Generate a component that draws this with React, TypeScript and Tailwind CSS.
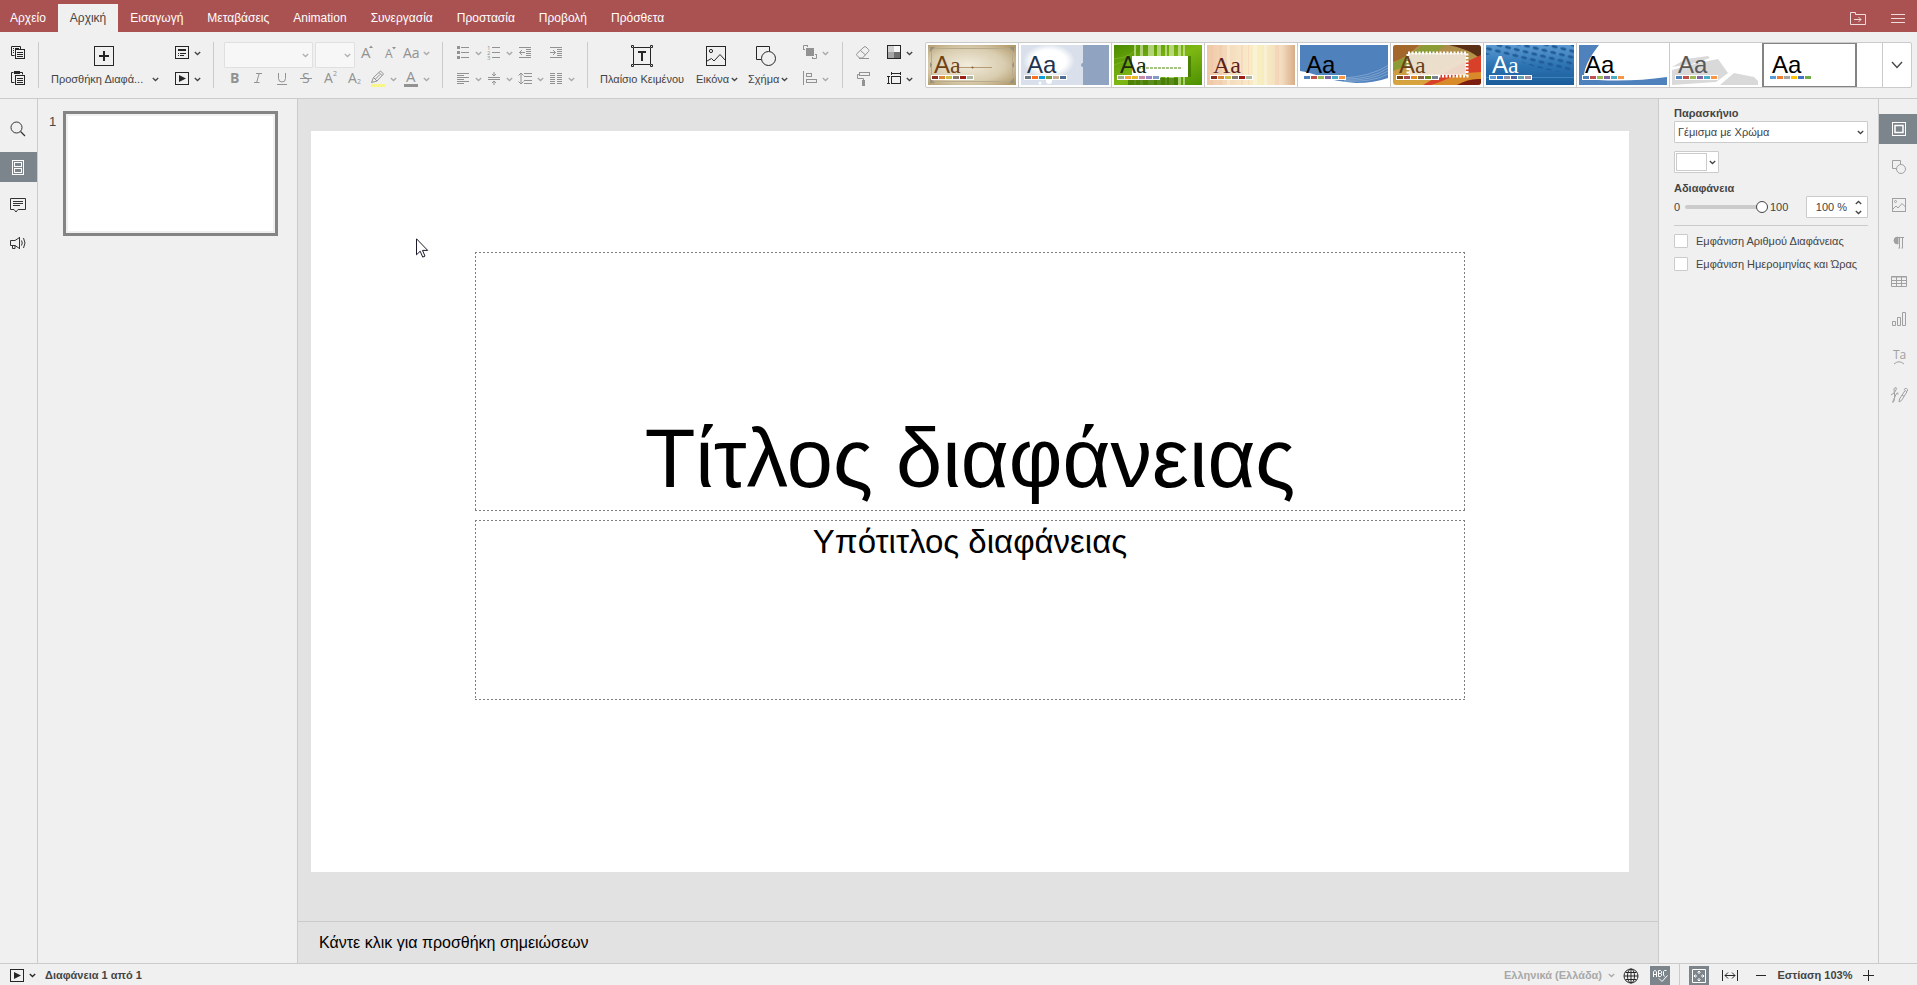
import type { ReactNode } from "react";

/* ---------- icon primitives ---------- */

function Icon({ size = 20, children, className = "" }: { size?: number; children: ReactNode; className?: string }) {
  return (
    <svg
      width={size}
      height={size}
      viewBox={`0 0 ${size} ${size}`}
      fill="none"
      stroke="currentColor"
      strokeWidth={1}
      aria-hidden="true"
      className={`shrink-0 overflow-visible ${className}`}
    >
      {children}
    </svg>
  );
}

function Caret({ className = "" }: { className?: string }) {
  return (
    <svg width={7} height={5} viewBox="0 0 7 5" fill="none" stroke="currentColor" strokeWidth={1.3} aria-hidden="true" className={`shrink-0 ${className}`}>
      <path d="M.8 1 3.5 3.5 6.2 1" />
    </svg>
  );
}

function Glyph({ x, y, size, bold, children }: { x: number; y: number; size: number; bold?: boolean; children: string }) {
  return (
    <text x={x} y={y} fontSize={size} stroke="none" fill="currentColor" fontWeight={bold ? 700 : 400} fontFamily="'Open Sans', sans-serif">
      {children}
    </text>
  );
}

const CopyIcon = (
  <Icon>
    <path d="M6.5 12.5h-3v-9h9v3M5 5.5h1M7 5.5h4M5 7.5h1M5 9.5h1" />
    <rect x="7.5" y="6.5" width="9" height="9" />
    <path d="M9 9.5h6M9 11.5h6M9 13.5h6" />
  </Icon>
);
const PasteIcon = (
  <Icon>
    <path d="M6.5 13.5h-3v-10h2M12 3.5h2.5v2" />
    <path d="M6 2h6v3H6z" fill="currentColor" stroke="none" />
    <rect x="7.5" y="6.5" width="9" height="9" />
    <path d="M9 9.5h6M9 11.5h6M9 13.5h6" />
  </Icon>
);
const LayoutIcon = (
  <Icon>
    <rect x="3.5" y="3.5" width="13" height="12" />
    <path d="M6 7h8" strokeWidth={2} />
    <path d="M6 10.5h1M8 10.5h6M6 12.5h1M8 12.5h4" />
  </Icon>
);
const PlayIcon = (
  <Icon>
    <rect x="3.5" y="3.5" width="13" height="12" />
    <path d="M7 6v7l7-3.5z" fill="currentColor" stroke="none" />
  </Icon>
);
const GrowFontIcon = (
  <Icon>
    <Glyph x={4} y={15} size={15}>A</Glyph>
    <path d="M12 5h4l-2-2.600z" fill="currentColor" stroke="none" />
  </Icon>
);
const ShrinkFontIcon = (
  <Icon>
    <Glyph x={5} y={15} size={12}>A</Glyph>
    <path d="M12 4h4l-2 2.600z" fill="currentColor" stroke="none" />
  </Icon>
);
const CaseIcon = (
  <Icon>
    <Glyph x={2} y={15} size={14}>Aa</Glyph>
  </Icon>
);
const BoldIcon = (
  <Icon>
    <Glyph x={6} y={14} size={14} bold>B</Glyph>
  </Icon>
);
const ItalicIcon = (
  <Icon>
    <path d="M8 4.500h6M6 13.500h5.500M11.200 4.500 8.600 13.500" />
  </Icon>
);
const UnderlineIcon = (
  <Icon>
    <path d="M6.500 4v5.500a3.500 3.500 0 0 0 7 0V4M5 15.500h10" />
  </Icon>
);
const StrikeIcon = (
  <Icon>
    <Glyph x={6} y={14} size={14}>S</Glyph>
    <path d="M4 9.500h12" />
  </Icon>
);
const SuperIcon = (
  <Icon>
    <Glyph x={4} y={14} size={14}>A</Glyph>
    <Glyph x={13} y={7} size={7}>2</Glyph>
  </Icon>
);
const SubIcon = (
  <Icon>
    <Glyph x={4} y={14} size={14}>A</Glyph>
    <Glyph x={13} y={15} size={7}>2</Glyph>
  </Icon>
);
const HighlightIcon = (
  <Icon>
    <path d="M3.500 13.500 5.500 8.500 12.500 2 15.500 5 9 12 3.500 13.500M5.500 8.500 9 12M7.500 10 12 5.500M11 3.500l3 3" />
    <path d="M3 15h14v3H3z" fill="#f8f688" stroke="none" />
  </Icon>
);
const FontColorIcon = (
  <Icon>
    <Glyph x={5} y={13} size={15}>A</Glyph>
    <path d="M3 15h14v3H3z" fill="currentColor" stroke="none" />
  </Icon>
);
const BulletsIcon = (
  <Icon>
    <path d="M8 4.500h8M8 9.500h8M8 14.500h8" />
    <path d="M4 3h3v3H4zM4 8h3v3H4zM4 13h3v3H4z" fill="currentColor" stroke="none" />
  </Icon>
);
const NumbersIcon = (
  <Icon>
    <path d="M8 4.500h8M8 9.500h8M8 14.500h8" />
    <Glyph x={3} y={7} size={6}>1</Glyph>
    <Glyph x={3} y={12} size={6}>2</Glyph>
    <Glyph x={3} y={17} size={6}>3</Glyph>
  </Icon>
);
const OutdentIcon = (
  <Icon>
    <path d="M4 4.500h12M11 6.500h5M11 8.500h5M11 10.500h5M11 12.500h5M4 14.500h12M10 9.500H4.500M7 7 4.500 9.500 7 12" />
  </Icon>
);
const IndentIcon = (
  <Icon>
    <path d="M4 4.500h12M11 6.500h5M11 8.500h5M11 10.500h5M11 12.500h5M4 14.500h12M4 9.500h5.500M7 7l2.500 2.500L7 12" />
  </Icon>
);
const AlignIcon = (
  <Icon>
    <path d="M4 4.500h12M4 6.500h7M4 8.500h12M4 10.500h7M4 12.500h12M4 14.500h7" />
  </Icon>
);
const MiddleIcon = (
  <Icon>
    <path d="M4 8.500h12M4 10.500h12M10 3v4M8 5l2 2 2-2M10 16v-4M8 14l2-2 2 2" />
  </Icon>
);
const SpacingIcon = (
  <Icon>
    <path d="M9 4.500h8M9 7.500h8M9 11.500h8M9 14.500h8M6 4v11M3.500 6.500 6 4l2.500 2.500M3.500 12.500 6 15l2.500-2.500" />
  </Icon>
);
const ColumnsIcon = (
  <Icon>
    <path d="M4 4.500h5M4 6.500h5M4 8.500h5M4 10.500h5M4 12.500h5M4 14.500h5M11 4.500h5M11 6.500h5M11 8.500h5M11 10.500h5M11 12.500h5M11 14.500h5" />
  </Icon>
);
const ArrangeIcon = (
  <Icon>
    <path d="M6 5h8v8H6z" fill="currentColor" stroke="none" />
    <path d="M3.500 7V2.500H8M16.500 11v4.500H12M3.500 6.500H5M12.500 14v1.500M7.500 2.500V4M15 11.500h1.500" />
  </Icon>
);
const AlignShapeIcon = (
  <Icon>
    <path d="M3.500 2v14" />
    <rect x="6.500" y="4.500" width="5" height="3" />
    <rect x="6.500" y="10.500" width="10" height="3" />
  </Icon>
);
const EraserIcon = (
  <Icon>
    <path d="M4 10.500 11 4q1-.8 2 0l2.500 2.500q1 1 0 2L9.500 15H6.500L4 12.500q-1-1 0-2M7.500 7.500 12.500 12M6 15.500h10" />
  </Icon>
);
const PainterIcon = (
  <Icon>
    <rect x="6.500" y="3.500" width="10" height="3" />
    <path d="M6 5.500H4.500v4h6V12" />
    <path d="M9 11h3v6H9z" fill="currentColor" stroke="none" />
  </Icon>
);
const ThemeColorsIcon = (
  <Icon>
    <path d="M4 3h6v6H4z" fill="#d0d0d0" stroke="none" />
    <path d="M10 3h6v6h-6z" fill="#f6f6f6" stroke="none" />
    <path d="M4 9h6v6H4z" fill="#a6a6a6" stroke="none" />
    <path d="M10 9h6v6h-6z" fill="#6e6e6e" stroke="none" />
    <rect x="3.500" y="2.500" width="13" height="13" />
  </Icon>
);
const SlideSizeIcon = (
  <Icon>
    <rect x="7.500" y="7.500" width="9" height="7" />
    <path d="M7 4.500h10M7.500 3v3M16.500 3v3M4.500 7v8M3 7.500h3M3 14.500h3" />
  </Icon>
);

/* ---------- toolbar building blocks ---------- */

function Tool({ icon, label, caret, width = "w-6", dark }: { icon: ReactNode; label: string; caret?: boolean; width?: string; dark?: boolean }) {
  return (
    <button
      type="button"
      aria-label={label}
      className={`flex h-[22px] items-center ${dark ? "text-[#262626]" : "text-[#929292]"} ${caret ? "w-[31px]" : `${width} justify-center`}`}
    >
      {icon}
      {caret && (
        <span className={`flex w-[11px] justify-center ${dark ? "text-[#444]" : "text-[#a8a8a8]"}`}>
          <Caret />
        </span>
      )}
    </button>
  );
}

function BigTool({ icon, label, caret, width, inset = "" }: { icon: ReactNode; label: string; caret?: boolean; width: string; inset?: string }) {
  return (
    <button type="button" className={`flex h-12 flex-col items-center text-[#262626] ${width}`}>
      <span className="flex h-7 items-center">{icon}</span>
      <span className={`flex h-[18px] w-full items-center justify-between text-[11px] whitespace-nowrap text-[#444] ${inset}`}>
        <span>{label}</span>
        {caret && <Caret />}
      </span>
    </button>
  );
}

const Divider = () => <div className="h-[46px] w-px shrink-0 bg-[#cbcbcb]" />;

function Stack({ children }: { children: ReactNode }) {
  return <div className="flex flex-col gap-1">{children}</div>;
}

function Row({ children, className = "" }: { children: ReactNode; className?: string }) {
  return <div className={`flex ${className}`}>{children}</div>;
}

function DisabledCombo({ label, width }: { label: string; width: string }) {
  return (
    <span className={`grid h-[22px] items-center ${width}`}>
      <select disabled aria-label={label} className="col-start-1 row-start-1 h-full w-full appearance-none rounded-[1px] border border-[#e0e0e0] bg-[#f7f7f7]" />
      <Caret className="pointer-events-none col-start-1 row-start-1 mr-1 justify-self-end text-[#b0b0b0]" />
    </span>
  );
}

/* ---------- theme gallery ---------- */

type Theme = {
  name: string;
  art: ReactNode;
  color: string;
  first: string;
  second: string;
  swatches: string[];
};

const SANS = "'Liberation Sans', sans-serif";
const SERIF = "'Liberation Serif', serif";
const OFFICE = ["#4f81bd", "#c0504d", "#9bbb59", "#8064a2", "#4bacc6", "#f79646"];
const EARTH = ["#8b2f22", "#d98634", "#cdbb44", "#87796a", "#9c1e14", "#adb69b"];

const THEMES: Theme[] = [
  {
    name: "Classic",
    color: "#6f4216",
    first: SANS,
    second: SERIF,
    swatches: EARTH,
    art: (
      <>
        <defs>
          <radialGradient id="classic" cx=".45" cy=".5" r=".7">
            <stop offset="0" stopColor="#f2ecdc" />
            <stop offset=".6" stopColor="#d9cdb0" />
            <stop offset="1" stopColor="#b09868" />
          </radialGradient>
        </defs>
        <rect width="88" height="40" fill="url(#classic)" />
        <rect x="3.500" y="3.500" width="81" height="33" fill="none" stroke="#b8ab8c" />
        <path d="M2 2h5l-5 5zM86 2h-5l5 5zM2 38h5l-5-5zM86 38h-5l5-5zM2 17l2 3-2 3zM86 17l-2 3 2 3z" fill="#97927f" />
        <path d="M30 22.500h34" stroke="#b59b78" />
        <circle cx="44.500" cy="22.500" r="1" fill="#8a5a2a" />
      </>
    ),
  },
  {
    name: "Lines",
    color: "#22344c",
    first: SANS,
    second: SANS,
    swatches: ["#6f7780", "#fb6f24", "#0a9fda", "#7b9a4c", "#c3ad8d", "#4e6c98"],
    art: (
      <>
        <defs>
          <radialGradient id="cloud">
            <stop offset=".65" stopColor="#fff" />
            <stop offset="1" stopColor="#fff" stopOpacity="0" />
          </radialGradient>
        </defs>
        <rect width="88" height="40" fill="#d9e0eb" />
        <ellipse cx="28" cy="16" rx="26" ry="17" fill="url(#cloud)" />
        <circle cx="28" cy="36" r="3" fill="#fff" />
        <circle cx="19" cy="38" r="1.500" fill="#fff" />
        <path d="M62 0h26v40H62z" fill="#90a4c2" />
        <path d="M62 18a2 2 0 0 0 0 4z" fill="#90a4c2" />
      </>
    ),
  },
  {
    name: "Green leaf",
    color: "#1e2a12",
    first: SANS,
    second: SERIF,
    swatches: ["#9fb08b", "#fda23c", "#e4b82b", "#cb8ba5", "#9c84c5", "#7f9dc4"],
    art: (
      <>
        <defs>
          <linearGradient id="leaf" x2="1" y2="1">
            <stop offset="0" stopColor="#4a8a00" />
            <stop offset=".5" stopColor="#7fb814" />
            <stop offset="1" stopColor="#4c9000" />
          </linearGradient>
        </defs>
        <rect width="88" height="40" fill="url(#leaf)" />
        <path d="M0 14Q20 12 24 0M0 20Q14 14 30 16" stroke="#8cc63a" strokeOpacity=".5" fill="none" />
        <path d="M20 0h2v40h-2zM26 0h3v40h-3zM34 0h6v40h-6zM43 0h4v40h-4zM51 0h2v40h-2zM55 0h5v40h-5zM64 0h3v40h-3zM69 0h2v40h-2z" fill="#e2f2c0" fillOpacity=".6" />
        <path d="M14 33h50v7H14zM74 11h3v21h-3z" fill="#3f7400" fillOpacity=".75" />
        <path d="M18 11h56v21H18z" fill="#fff" />
        <path d="M24 23h44" stroke="#a5c483" strokeWidth="2" strokeDasharray="3 1" />
      </>
    ),
  },
  {
    name: "Pastel stripes",
    color: "#5d1e1a",
    first: SERIF,
    second: SERIF,
    swatches: EARTH,
    art: (
      <>
        <defs>
          <linearGradient id="pastel">
            <stop offset="0" stopColor="#efc9a8" />
            <stop offset=".4" stopColor="#f7e6c8" />
            <stop offset=".6" stopColor="#f8efc0" />
            <stop offset=".85" stopColor="#f3dcc0" />
            <stop offset="1" stopColor="#d8ad88" />
          </linearGradient>
        </defs>
        <rect width="88" height="40" fill="url(#pastel)" />
        <path d="M4 0h2v40H4zM12 0h3v40h-3zM34 0h2v40h-2zM41 0h1v40h-1zM68 0h4v40h-4z" fill="#f4b9a4" fillOpacity=".25" />
        <path d="M20 0h3v40h-3zM46 0h4v40h-4zM57 0h3v40h-3z" fill="#fff" fillOpacity=".3" />
      </>
    ),
  },
  {
    name: "Blue wave",
    color: "#000",
    first: SANS,
    second: SANS,
    swatches: OFFICE,
    art: (
      <>
        <rect width="88" height="40" fill="#fff" />
        <path d="M0 0h88v33Q74 38 56 38 36 36.500 22 32 8 27 0 26z" fill="#4f81bd" />
        <path d="M46 34Q72 34 88 23M44 35.200Q72 36 88 26M44 36.200Q73 37.500 88 29M42 33Q70 32 88 20.500" stroke="#c6d6ea" strokeOpacity=".5" strokeWidth=".8" fill="none" />
      </>
    ),
  },
  {
    name: "Safari",
    color: "#6b3f16",
    first: SANS,
    second: SERIF,
    swatches: ["#7a3f0f", "#a5494c", "#e08a1d", "#8a6347", "#698b1c", "#76808f"],
    art: (
      <>
        <defs>
          <clipPath id="safari">
            <rect width="88" height="40" rx="3" />
          </clipPath>
          <linearGradient id="sand" x2="0" y2="1">
            <stop offset="0" stopColor="#a98b4c" />
            <stop offset="1" stopColor="#d9a53e" />
          </linearGradient>
        </defs>
        <g clipPath="url(#safari)">
          <rect width="88" height="40" fill="url(#sand)" />
          <path d="M0 0h26Q12 14 0 17z" fill="#a3672c" />
          <path d="M0 18Q24 6 30 0h22Q40 12 24 17 10 22 0 26z" fill="#8b9b35" />
          <path d="M56 0h32v14Q76 4 56 0z" fill="#5b2f16" />
          <path d="M88 10v22Q68 30 52 36L38 40h-8Q56 24 88 10z" fill="#d8402a" />
          <path d="M88 27v13H40Q66 27 88 27z" fill="#d98a2a" />
          <path d="M64 40q12-7 24-6v6z" fill="#7d1d10" />
        </g>
        <rect x="16" y="8" width="57" height="22" fill="#efe6d9" fillOpacity=".9" />
        <rect x="15" y="8" width="59" height="23" fill="none" stroke="#fff" strokeWidth="3" strokeDasharray="2 1.500" />
      </>
    ),
  },
  {
    name: "Dotted",
    color: "#fff",
    first: SANS,
    second: SERIF,
    swatches: ["#5c9bd8", "#2a76d2", "#8a8fa8", "#4b62a8", "#5ea3ae", "#a08ba0"],
    art: (
      <>
        <defs>
          <linearGradient id="dotted" x2="0" y2="1">
            <stop offset="0" stopColor="#5d9bd2" />
            <stop offset=".5" stopColor="#2d74b3" />
            <stop offset="1" stopColor="#1a5c99" />
          </linearGradient>
          <pattern id="dots" width="9" height="6" patternUnits="userSpaceOnUse" patternTransform="rotate(14)">
            <ellipse cx="4" cy="3" rx="3" ry="1.600" fill="#1f5c98" />
          </pattern>
        </defs>
        <rect width="88" height="40" fill="url(#dotted)" />
        <path d="M0 0h88v28Q50 26 30 14 16 6 0 10z" fill="url(#dots)" />
        <path d="M0 32.500h88" stroke="#4c93c8" strokeOpacity=".7" />
      </>
    ),
  },
  {
    name: "Corner",
    color: "#000",
    first: SANS,
    second: SANS,
    swatches: OFFICE,
    art: (
      <>
        <rect width="88" height="40" fill="#fff" />
        <path d="M0 0h20Q6 18 5 30q3 4 14 5 34 2 69-3v8H0z" fill="#4f81bd" />
      </>
    ),
  },
  {
    name: "Turtle",
    color: "#595959",
    first: SANS,
    second: SANS,
    swatches: OFFICE,
    art: (
      <>
        <rect width="88" height="40" fill="#fff" />
        <path d="M0 22 14 14l22-3 2 2-18 6zM0 40V25l26-7 20-4 10 14-12 9zM48 40l14-12 20 4 4 4v4z" fill="#d9d9d9" />
      </>
    ),
  },
  {
    name: "Blank",
    color: "#000",
    first: SANS,
    second: SANS,
    swatches: ["#5b9bd5", "#ed7d31", "#a5a5a5", "#ffc000", "#4472c4", "#70ad47"],
    art: <rect width="88" height="40" fill="#fff" />,
  },
];

function ThemeTile({ theme, selected }: { theme: Theme; selected?: boolean }) {
  return (
    <button
      type="button"
      aria-label={theme.name}
      aria-pressed={!!selected}
      className={`flex h-11 w-[93px] shrink-0 items-center justify-center ${
        selected ? "outline-2 -outline-offset-1 outline-[#848484]" : "border-r border-[#cbcbcb]"
      }`}
    >
      <svg width="88" height="40" viewBox="0 0 88 40">
        {theme.art}
        <text x="6" y="28" fontSize="24" fill={theme.color}>
          <tspan fontFamily={theme.first}>A</tspan>
          <tspan fontFamily={theme.second}>a</tspan>
        </text>
        <rect x="3" y="30" width="43" height="5" fill="#fff" />
        {theme.swatches.map((c, i) => (
          <rect key={c} x={4 + i * 7} y="31" width="6" height="3" fill={c} />
        ))}
      </svg>
    </button>
  );
}

/* ---------- side rails ---------- */

function RailButton({ icon, label, active, tone }: { icon: ReactNode; label: string; active?: boolean; tone: string }) {
  return (
    <button type="button" aria-label={label} className={`flex h-[30px] w-full items-center ${active ? "bg-[#7d858c]" : ""} ${tone}`}>
      <span className={active ? "text-white" : ""}>{icon}</span>
    </button>
  );
}

const LEFT_RAIL = [
  {
    label: "Αναζήτηση",
    icon: (
      <Icon>
        <circle cx="8.500" cy="8.500" r="5.500" />
        <path d="m12.500 12.500 4.500 4.500" strokeWidth={1.300} />
      </Icon>
    ),
  },
  {
    label: "Διαφάνειες",
    active: true,
    icon: (
      <Icon>
        <rect x="4.500" y="3.500" width="11" height="14" />
        <rect x="6.500" y="5.500" width="7" height="4" />
        <rect x="6.500" y="11.500" width="7" height="4" />
      </Icon>
    ),
  },
  {
    label: "Σχόλια",
    icon: (
      <Icon>
        <path d="M2.500 3.500h15v11H10l-2 2.500-2-2.500H2.500zM5 6.500h10M5 8.500h10M5 10.500h7" />
      </Icon>
    ),
  },
  {
    label: "Ανατροφοδότηση",
    icon: (
      <Icon>
        <path d="M2.500 7.500H7l4.500-3v11L7 12.500H2.500zM4.500 12.500v3h2.500v-3M11.500 4v12" />
        <path d="M13.500 7.500q1.500 2.500 0 5M15.500 5q3 5 0 10" />
      </Icon>
    ),
  },
];

const RIGHT_RAIL = [
  {
    label: "Διαφάνεια",
    active: true,
    icon: (
      <Icon>
        <rect x="3.500" y="3.500" width="13" height="13" />
        <rect x="6" y="6.500" width="8" height="7" strokeWidth={1.500} />
      </Icon>
    ),
  },
  {
    label: "Σχήμα",
    icon: (
      <Icon>
        <path d="M7 11.500H3.500v-8h8V7" />
        <circle cx="12" cy="12" r="4.500" />
      </Icon>
    ),
  },
  {
    label: "Εικόνα",
    icon: (
      <Icon>
        <rect x="3.500" y="3.500" width="13" height="13" />
        <circle cx="6.500" cy="6.500" r="1" />
        <path d="m4 14 3-3 2 2 4-4.500 3.500 3.500" />
      </Icon>
    ),
  },
  {
    label: "Παράγραφος",
    icon: (
      <Icon>
        <path d="M9 4a4 3.500 0 0 0 0 7z" fill="currentColor" />
        <path d="M8 4.500h7M10.500 4v11M13.500 4v11M9.500 15h1.500M12.500 15H14" />
      </Icon>
    ),
  },
  {
    label: "Πίνακας",
    icon: (
      <Icon>
        <path d="M2.500 5.500h15v10h-15zM2 6h16M2.500 9.500h15M2.500 12.500h15M7.500 6v9.500M12.500 6v9.500" />
      </Icon>
    ),
  },
  {
    label: "Γράφημα",
    icon: (
      <Icon>
        <path d="M3.500 12.500h3v4h-3zM8.500 8.500h3v8h-3zM13.500 3.500h3v13h-3z" />
      </Icon>
    ),
  },
  {
    label: "TextArt",
    icon: (
      <Icon>
        <Glyph x={4} y={12} size={12}>Ta</Glyph>
        <path d="M5 17q5-4.500 10 0" />
      </Icon>
    ),
  },
  {
    label: "Υπογραφή",
    icon: (
      <Icon>
        <path d="M2 10q4-2 5-5t-.8-2.500-1 4 .3 7-1.500 4T6 11.500 9 9.500" />
        <path d="M10.500 14 16 5.500l2 1.200L12.500 15.500l-2.500 1.500zM15 5l1-1.500q2-.5 2.500 1L18.500 6M13 10l2 1.200" />
      </Icon>
    ),
  },
];

const TABS = ["Αρχείο", "Αρχική", "Εισαγωγή", "Μεταβάσεις", "Animation", "Συνεργασία", "Προστασία", "Προβολή", "Πρόσθετα"];

const FRAME =
  "bg-[repeating-linear-gradient(90deg,#7f7f7f_0_2px,transparent_2px_4px),repeating-linear-gradient(90deg,#7f7f7f_0_2px,transparent_2px_4px),repeating-linear-gradient(180deg,#7f7f7f_0_2px,transparent_2px_4px),repeating-linear-gradient(180deg,#7f7f7f_0_2px,transparent_2px_4px)] bg-[length:100%_1px,100%_1px,1px_100%,1px_100%] bg-[position:top,bottom,left,right] bg-no-repeat";

/* ---------- page sections ---------- */

function Header() {
  return (
    <header className="flex h-8 shrink-0 items-end bg-[#aa5252] text-white">
      <nav className="flex">
        {TABS.map((tab, i) => (
          <button
            key={tab}
            type="button"
            className={`flex h-7 items-center pr-3 text-[12px] ${i === 0 ? "pl-[10px]" : "pl-3"} ${i === 1 ? "bg-[#f0f0f0] text-[#444]" : ""}`}
          >
            {tab}
          </button>
        ))}
      </nav>
      <div className="mr-[9px] ml-auto flex h-7 items-center gap-5 text-[#f0dcdc]">
        <button type="button" aria-label="Άνοιγμα θέσης αρχείου">
          <Icon>
            <path d="M2.500 4.500h5v2h10v10h-15zM6 11.500h7M10.500 9l2.500 2.500-2.500 2.500" />
          </Icon>
        </button>
        <button type="button" aria-label="Μενού">
          <Icon>
            <path d="M3 6.500h14M3 10.500h14M3 14.500h14" />
          </Icon>
        </button>
      </div>
    </header>
  );
}

function Toolbar() {
  return (
    <div className="flex h-[67px] shrink-0 items-start border-b border-[#cbcbcb] pt-[10px]">
      <div className="pr-[10px] pl-2">
        <Stack>
          <Tool dark width="w-5" icon={CopyIcon} label="Αντιγραφή" />
          <Tool dark width="w-5" icon={PasteIcon} label="Επικόλληση" />
        </Stack>
      </div>
      <Divider />
      <div className="flex gap-[13px] px-[10px]">
        <BigTool
          width="w-[110px]"
          inset="pl-[2px]"
          caret
          label="Προσθήκη Διαφά..."
          icon={
            <Icon>
              <rect x=".5" y=".5" width="19" height="19" />
              <path d="M10 5v10M5 10h10" strokeWidth={2} />
            </Icon>
          }
        />
        <Stack>
          <Tool dark caret icon={LayoutIcon} label="Διάταξη" />
          <Tool dark caret icon={PlayIcon} label="Προβολή παρουσίασης" />
        </Stack>
      </div>
      <Divider />
      <div className="pr-[10px] pl-2">
        <Stack>
          <Row className="pl-[2px]">
            <DisabledCombo label="Γραμματοσειρά" width="mr-[2px] w-[89px]" />
            <DisabledCombo label="Μέγεθος" width="w-10" />
            <Tool width="w-[23px]" icon={GrowFontIcon} label="Αύξηση μεγέθους" />
            <Tool width="w-[23px]" icon={ShrinkFontIcon} label="Μείωση μεγέθους" />
            <Tool caret icon={CaseIcon} label="Πεζά-κεφαλαία" />
          </Row>
          <Row>
            <Tool icon={BoldIcon} label="Έντονα" />
            <Tool icon={ItalicIcon} label="Πλάγια" />
            <Tool icon={UnderlineIcon} label="Υπογράμμιση" />
            <Tool icon={StrikeIcon} label="Διακριτή διαγραφή" />
            <Tool icon={SuperIcon} label="Εκθέτης" />
            <Tool icon={SubIcon} label="Δείκτης" />
            <div className="flex gap-[2px] pl-[2px]">
              <Tool caret icon={HighlightIcon} label="Χρώμα επισήμανσης" />
              <Tool caret icon={FontColorIcon} label="Χρώμα γραμματοσειράς" />
            </div>
          </Row>
        </Stack>
      </div>
      <Divider />
      <div className="px-[10px]">
        <Stack>
          <Row>
            <Tool caret icon={BulletsIcon} label="Κουκκίδες" />
            <Tool caret icon={NumbersIcon} label="Αρίθμηση" />
            <Tool width="w-5" icon={OutdentIcon} label="Μείωση εσοχής" />
            <div className="pl-[11px]">
              <Tool width="w-5" icon={IndentIcon} label="Αύξηση εσοχής" />
            </div>
          </Row>
          <Row>
            <Tool caret icon={AlignIcon} label="Οριζόντια στοίχιση" />
            <Tool caret icon={MiddleIcon} label="Κατακόρυφη στοίχιση" />
            <Tool caret icon={SpacingIcon} label="Διάστιχο" />
            <Tool caret icon={ColumnsIcon} label="Στήλες" />
          </Row>
        </Stack>
      </div>
      <Divider />
      <div className="flex gap-3 pr-[11px] pl-3">
        <BigTool
          width="w-[84px]"
          label="Πλαίσιο Κειμένου"
          icon={
            <Icon size={22}>
              <path d="M3 2.500h16M3 19.500h16M2.500 3v16M19.500 3v16" />
              <path d="M.5.500h2v2h-2zM19.500.500h2v2h-2zM.5 19.500h2v2h-2zM19.500 19.500h2v2h-2z" fill="#f0f0f0" />
              <path d="M7 7h8M11 7v9" strokeWidth={2} />
            </Icon>
          }
        />
        <div className="flex gap-[10px]">
          <BigTool
            width="w-[42px]"
            caret
            label="Εικόνα"
            icon={
              <Icon size={22}>
                <g transform="translate(0 1)">
                  <rect x=".5" y=".5" width="19" height="19" />
                  <circle cx="5" cy="5" r="1.600" />
                  <path d="m1 15 4.500-2.500L8 15l6-6.500 5.500 6" />
                </g>
              </Icon>
            }
          />
          <BigTool
            width="w-10"
            caret
            label="Σχήμα"
            icon={
              <Icon size={24}>
                <g transform="translate(0 2)">
                  <path d="M5 13.500H.5V.5h13V5" />
                  <circle cx="12.500" cy="12.500" r="7" />
                </g>
              </Icon>
            }
          />
        </div>
        <Stack>
          <Tool caret icon={ArrangeIcon} label="Διευθέτηση" />
          <Tool caret icon={AlignShapeIcon} label="Στοίχιση σχήματος" />
        </Stack>
      </div>
      <Divider />
      <div className="flex gap-[11px] px-[10px]">
        <Stack>
          <Tool width="w-5" icon={EraserIcon} label="Εκκαθάριση στυλ" />
          <Tool width="w-5" icon={PainterIcon} label="Αντιγραφή στυλ" />
        </Stack>
        <Stack>
          <Tool dark caret icon={ThemeColorsIcon} label="Χρωματικός συνδυασμός" />
          <Tool dark caret icon={SlideSizeIcon} label="Μέγεθος διαφάνειας" />
        </Stack>
      </div>
      <div className="mr-[5px] flex h-[46px] min-w-0 flex-1 rounded-[2px] border border-[#cbcbcb] bg-white">
        <div className="flex min-w-0 flex-1 overflow-hidden">
          {THEMES.map((t, i) => (
            <ThemeTile key={t.name} theme={t} selected={i === THEMES.length - 1} />
          ))}
        </div>
        <button type="button" aria-label="Περισσότερα θέματα" className="flex w-[29px] items-center justify-center border-l border-[#cbcbcb] text-[#444]">
          <svg width="12" height="8" viewBox="0 0 12 8" fill="none" stroke="currentColor" strokeWidth="1.300" aria-hidden="true">
            <path d="m1 1 5 5.500L11 1" />
          </svg>
        </button>
      </div>
    </div>
  );
}

function Canvas() {
  return (
    <main className="flex min-w-0 flex-1 flex-col bg-[#e2e2e2]">
      <div className="flex min-h-0 flex-1 pt-8 pr-[29px] pb-[49px] pl-[13px]">
        <section className="relative grid flex-1 grid-cols-[164fr_990fr_164fr] grid-rows-[121fr_259fr_9fr_180fr_172fr] bg-white font-['Liberation_Sans',sans-serif] text-black">
          <div className={`col-start-2 row-start-2 flex items-end justify-center pb-[6px] ${FRAME}`}>
            <h1 className="text-[83px] leading-[92px] whitespace-nowrap">Τίτλος διαφάνειας</h1>
          </div>
          <div className={`col-start-2 row-start-4 flex items-start justify-center pt-[3px] ${FRAME}`}>
            <h2 className="text-[33px] leading-[38px] whitespace-nowrap">Υπότιτλος διαφάνειας</h2>
          </div>
          <svg className="absolute top-[107px] left-[105px]" width="13" height="20" viewBox="0 0 13 20" aria-hidden="true">
            <path d="M.5.800v16l3.700-3.600 2.500 5.900 2.300-1-2.500-5.700h5.200z" fill="#fff" stroke="#1a1a2a" />
          </svg>
        </section>
      </div>
      <div className="flex h-[42px] shrink-0 items-center border-t border-[#cbcbcb] pl-[21px] text-[16px] text-black">
        Κάντε κλικ για προσθήκη σημειώσεων
      </div>
    </main>
  );
}

function SlideSettings() {
  return (
    <aside className="w-[221px] shrink-0 border-x border-[#cbcbcb] pt-[7px] pr-[10px] pl-[15px] text-[11px]">
      <label htmlFor="fill" className="block h-[15px] leading-[14px] font-bold">
        Παρασκήνιο
      </label>
      <div className="grid h-[22px] items-center">
        <select id="fill" className="col-start-1 row-start-1 h-full w-full appearance-none rounded-[1px] border border-[#cbcbcb] bg-white pl-[3px]">
          <option>Γέμισμα με Χρώμα</option>
        </select>
        <Caret className="pointer-events-none col-start-1 row-start-1 mr-1 justify-self-end" />
      </div>
      <button type="button" aria-label="Χρώμα γεμίσματος" className="mt-2 flex h-[22px] w-[45px] items-center gap-[2px] rounded-[1px] border border-[#cbcbcb] bg-white pl-px">
        <span className="h-[18px] w-[31px] border border-[#cbcbcb] bg-white" />
        <Caret />
      </button>
      <label htmlFor="opacity" className="mt-2 block h-[15px] leading-[14px] font-bold">
        Αδιαφάνεια
      </label>
      <div className="flex h-[22px] items-center">
        <span className="w-[11px]">0</span>
        <input
          id="opacity"
          type="range"
          min={0}
          max={100}
          defaultValue={100}
          className="h-3 w-[83px] appearance-none bg-transparent [&::-webkit-slider-runnable-track]:h-1 [&::-webkit-slider-runnable-track]:rounded-sm [&::-webkit-slider-runnable-track]:bg-[#cbcbcb] [&::-webkit-slider-thumb]:-mt-1 [&::-webkit-slider-thumb]:size-3 [&::-webkit-slider-thumb]:appearance-none [&::-webkit-slider-thumb]:rounded-full [&::-webkit-slider-thumb]:border [&::-webkit-slider-thumb]:border-[#444] [&::-webkit-slider-thumb]:bg-white"
        />
        <span className="pl-[2px]">100</span>
        <span className="ml-auto flex h-[22px] w-[62px] items-center rounded-[1px] border border-[#cbcbcb] bg-white pr-[5px]">
          <input aria-label="Ποσοστό αδιαφάνειας" defaultValue="100 %" className="w-full min-w-0 bg-transparent pr-2 text-right" />
          <span className="flex flex-col gap-[5px]">
            <button type="button" aria-label="Αύξηση" className="block">
              <Caret className="block rotate-180" />
            </button>
            <button type="button" aria-label="Μείωση" className="block">
              <Caret className="block" />
            </button>
          </span>
        </span>
      </div>
      <hr className="mt-[7px] border-t border-[#cbcbcb]" />
      <div className="flex flex-col gap-[9px] pt-2">
        {["Εμφάνιση Αριθμού Διαφάνειας", "Εμφάνιση Ημερομηνίας και Ώρας"].map((text) => (
          <label key={text} className="flex h-[14px] items-center gap-2 whitespace-nowrap">
            <input type="checkbox" className="size-[14px] shrink-0 appearance-none rounded-[1px] border border-[#cbcbcb] bg-white" />
            {text}
          </label>
        ))}
      </div>
    </aside>
  );
}

function StatusBar() {
  return (
    <footer className="flex h-[22px] shrink-0 items-center border-t border-[#cbcbcb] pt-[2px] text-[11px] font-bold">
      <button type="button" aria-label="Έναρξη παρουσίασης" className="ml-[7px] flex items-center text-[#262626]">
        <Icon>
          <rect x="3.500" y="3.500" width="13" height="12" />
          <path d="M7 6v7l7-3.500z" fill="currentColor" stroke="none" />
        </Icon>
        <Caret className="ml-[2px]" />
      </button>
      <span className="ml-[9px]">Διαφάνεια 1 από 1</span>
      <div className="mr-[38px] ml-auto flex h-full items-center">
        <button type="button" className="flex items-center gap-[6px] text-[#a8a8a8]">
          Ελληνικά (Ελλάδα)
          <Caret />
        </button>
        <button type="button" aria-label="Γλώσσα εγγράφου" className="ml-[6px] text-[#262626]">
          <Icon>
            <circle cx="10" cy="10" r="7" />
            <ellipse cx="10" cy="10" rx="3.500" ry="7" />
            <path d="M10 3v14M3 10h14M4.500 6.500h11M4.500 13.500h11" />
          </Icon>
        </button>
        <button type="button" aria-label="Ορθογραφικός έλεγχος" className="ml-[9px] h-[19px] overflow-hidden bg-[#7d858c] text-white">
          <Icon>
            <path d="M3.500 11V6l1-1.500h1l1 1.500v5M3.500 8.500h3M8.500 4.500v6h2l1-1V8l-1-.5 1-.5V5.500l-1-1zM8.500 7.500h2M16.500 4.500h-2l-1 1V9l1 1.500M9 12.500l3 3 5.500-6" />
          </Icon>
        </button>
        <div className="-mt-[2px] ml-[9px] w-px self-stretch bg-[#cbcbcb]" />
        <button type="button" aria-label="Προσαρμογή στη διαφάνεια" className="ml-[9px] h-[19px] overflow-hidden bg-[#7d858c] text-white">
          <Icon>
            <path d="M3.500 3.500h13v13h-13zM10 5v3M8.500 6.500 10 5l1.500 1.500M10 15v-3M8.500 13.500 10 15l1.500-1.500M5 10h3M6.500 8.500 5 10l1.500 1.500M15 10h-3M13.500 8.500 15 10l-1.500 1.500" />
          </Icon>
        </button>
        <button type="button" aria-label="Προσαρμογή στο πλάτος" className="ml-[11px] text-[#262626]">
          <Icon>
            <path d="M2.500 4v11M17.500 4v11M5 9.500h10M8 6.500l-3 3 3 3M12 6.500l3 3-3 3" />
          </Icon>
        </button>
        <button type="button" aria-label="Σμίκρυνση" className="ml-[11px] text-[#262626]">
          <Icon>
            <path d="M5 9.500h10" />
          </Icon>
        </button>
        <span className="mx-[6px] w-[76px] text-center whitespace-nowrap">Εστίαση 103%</span>
        <button type="button" aria-label="Μεγέθυνση" className="text-[#262626]">
          <Icon>
            <path d="M4 9.500h11M9.500 4v11" />
          </Icon>
        </button>
      </div>
    </footer>
  );
}

export default function App() {
  return (
    <div className="flex h-screen flex-col overflow-hidden bg-[#f0f0f0] font-['Liberation_Sans',sans-serif] text-[#444]">
      <Header />
      <Toolbar />
      <div className="flex min-h-0 flex-1">
        <nav className="flex w-[38px] shrink-0 flex-col gap-2 border-r border-[#cbcbcb] pt-[15px]">
          {LEFT_RAIL.map((b) => (
            <RailButton key={b.label} {...b} tone="pl-2 text-[#333]" />
          ))}
        </nav>
        <aside className="flex w-[260px] shrink-0 items-start border-r border-[#cbcbcb] pt-3">
          <span className="w-[25px] pt-[3px] pl-[11px] text-[13px] leading-4">1</span>
          <button type="button" aria-label="Διαφάνεια 1" className="h-[125px] w-[215px] border-3 border-[#848484] p-[2px]">
            <span className="block h-full bg-white" />
          </button>
        </aside>
        <Canvas />
        <SlideSettings />
        <nav className="flex w-[38px] shrink-0 flex-col gap-2 pt-[15px]">
          {RIGHT_RAIL.map((b) => (
            <RailButton key={b.label} {...b} tone="pl-[10px] text-[#a0a0a0]" />
          ))}
        </nav>
      </div>
      <StatusBar />
    </div>
  );
}
